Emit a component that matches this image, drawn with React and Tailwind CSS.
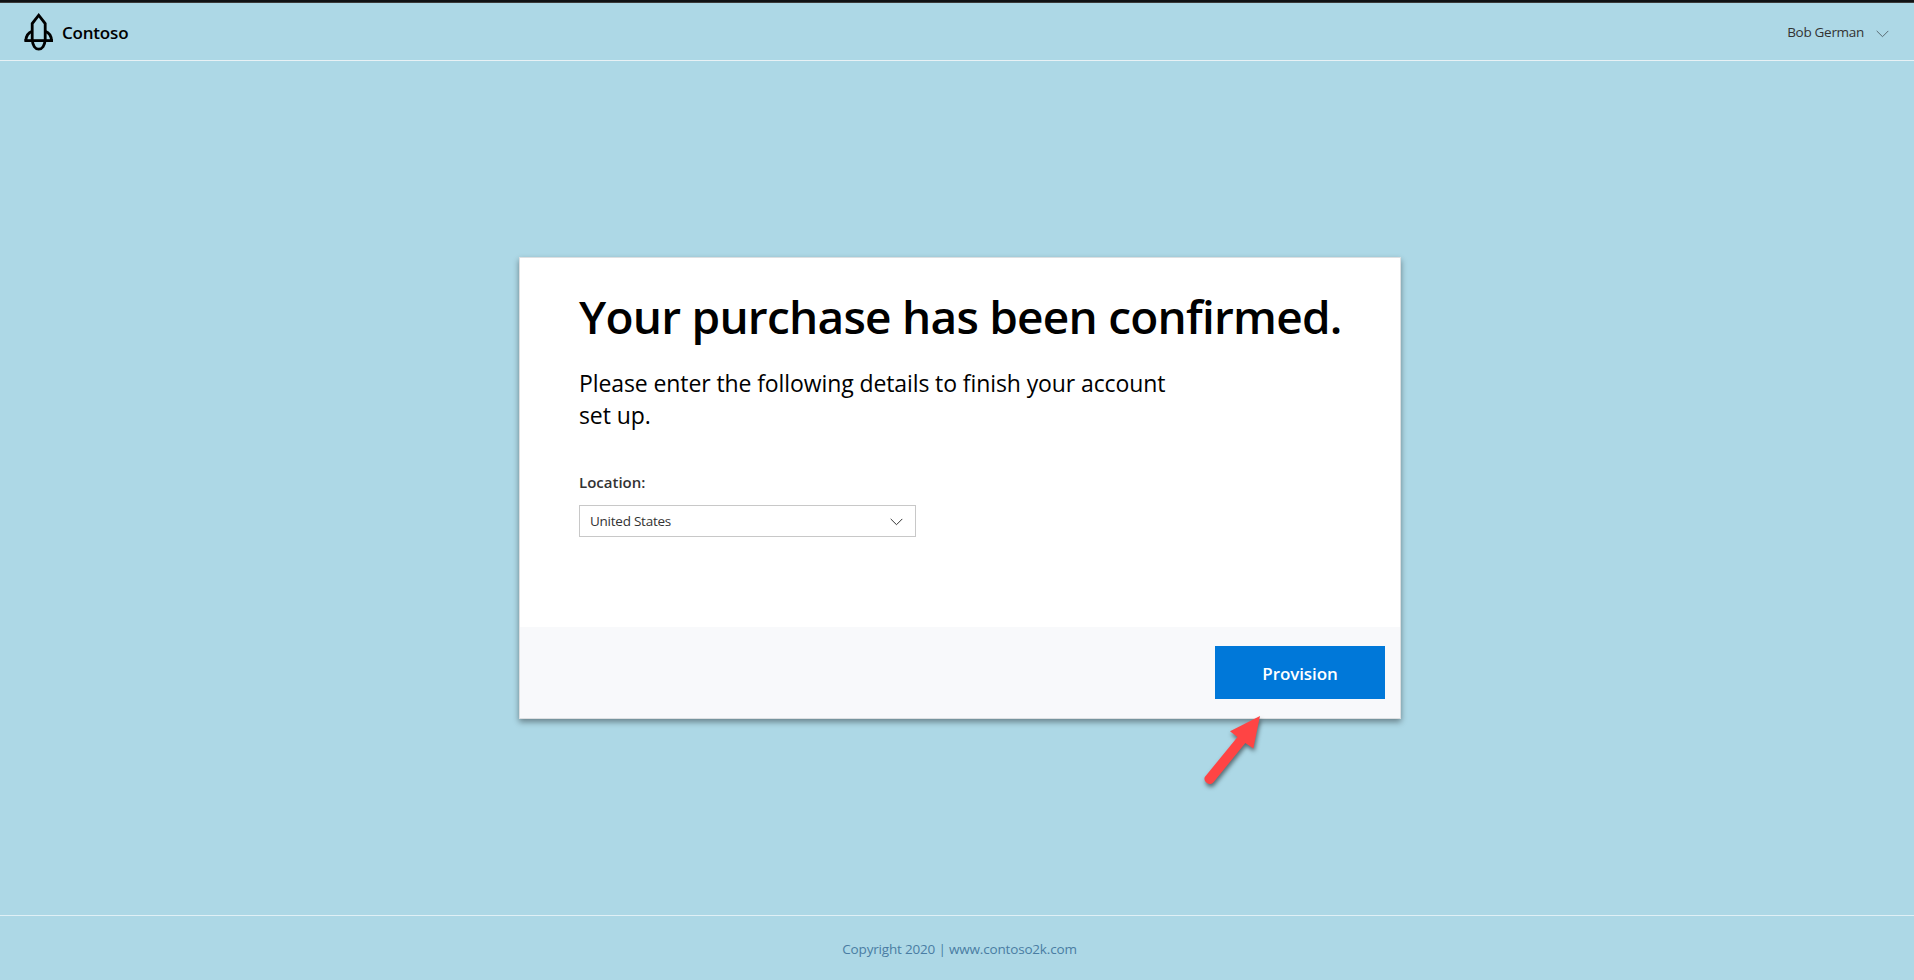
function RocketLogo() {
  return (
    <svg width="31" height="41" viewBox="0 0 31 41" fill="none" stroke="#000" strokeWidth="2.8" className="shrink-0">
      <path d="M9.2 29.6V12.6L15.7 4.2L22.2 12.6V29.6" />
      <path d="M1.4 29.6H30" />
      <path d="M9.2 20.4C5.6 21.6 3.2 24.6 2.8 29.6M22.2 20.4C25.8 21.6 28.2 24.6 28.6 29.6" />
      <path d="M9.4 29.6C9.6 34.4 12.2 38.2 15.7 38.2C19.2 38.2 21.8 34.4 22 29.6" />
    </svg>
  );
}

function Chevron({ className }) {
  return (
    <svg width="13" height="8" viewBox="0 0 13 8" fill="none" stroke="currentColor" strokeWidth="1" className={className}>
      <path d="M0.7 0.9L6.5 6.7L12.3 0.9" />
    </svg>
  );
}

function Arrow() {
  return (
    <svg
      width="80"
      height="90"
      viewBox="0 0 80 90"
      className="absolute left-[680px] top-[453px] overflow-visible"
      style={{ filter: "drop-shadow(1px 3px 2px rgba(0,0,0,0.5))" }}
    >
      <path d="M60 5L53.3 37.5L45.3 32L13.3 71.5A5.2 5.2 0 0 1 4.8 66L37.5 26L30 20.3Z" fill="#ff4444" />
    </svg>
  );
}

export default function App() {
  return (
    <div className="flex h-[980px] w-[1914px] flex-col overflow-hidden bg-[#add8e6] font-['Open_Sans','Noto_Sans',sans-serif] text-black">
      <div className="h-[3px] shrink-0 border-b border-[#3a3a3a] bg-[#101214]" />
      <header className="flex h-[58px] shrink-0 items-center justify-between border-b border-[#e8f1f5] pl-[23px] pr-[25px]">
        <div className="flex items-center gap-2">
          <RocketLogo />
          <span className="pt-0.5 text-[17px] font-semibold leading-6 tracking-[-0.2px]">Contoso</span>
        </div>
        <div className="flex items-center gap-3 text-[#333]">
          <span className="text-[13.5px] leading-5 tracking-[-0.3px]">Bob German</span>
          <Chevron className="mt-1 text-[#5a6a72]" />
        </div>
      </header>

      <main className="flex flex-1 flex-col items-start pl-[519px] pt-[196px]">
        <section className="relative flex h-[462px] w-[882px] flex-col border border-[#dcdfe1] bg-white shadow-[0_3px_6px_rgba(0,0,0,0.4)]">
          <div className="h-[369px] pl-[59px] pt-[26px]">
            <h1 className="whitespace-nowrap text-[46px] font-semibold leading-[64px] tracking-[-0.76px]">
              Your purchase has been confirmed.
            </h1>
            <p className="mt-[19px] whitespace-nowrap text-[23px] leading-8 tracking-[-0.1px]">
              Please enter the following details to finish your account
              <br />
              set up.
            </p>
            <div className="mt-[41px] text-[15px] font-semibold leading-5 text-[#333]">Location:</div>
            <div className="mt-[13px] flex h-8 w-[337px] items-center justify-between border border-[#c8c8c8] pl-2.5 pr-3 text-[13.5px] tracking-[-0.25px] text-[#333]">
              <span>United States</span>
              <Chevron className="mt-0.5" />
            </div>
          </div>
          <footer className="flex flex-1 items-center justify-end bg-[#f8f9fb] pr-[15px]">
            <button className="h-[53px] w-[170px] bg-[#0078d9] pt-0.5 text-[17px] font-semibold leading-6 tracking-[-0.1px] text-white">
              Provision
            </button>
          </footer>
          <Arrow />
        </section>
      </main>

      <footer className="flex h-[65px] shrink-0 items-center justify-center border-t border-[#e0f0f6] pl-[5px] pt-[3px] text-[13.5px] tracking-[-0.18px] text-[#4a7da3]">
        Copyright 2020 | www.contoso2k.com
      </footer>
    </div>
  );
}
